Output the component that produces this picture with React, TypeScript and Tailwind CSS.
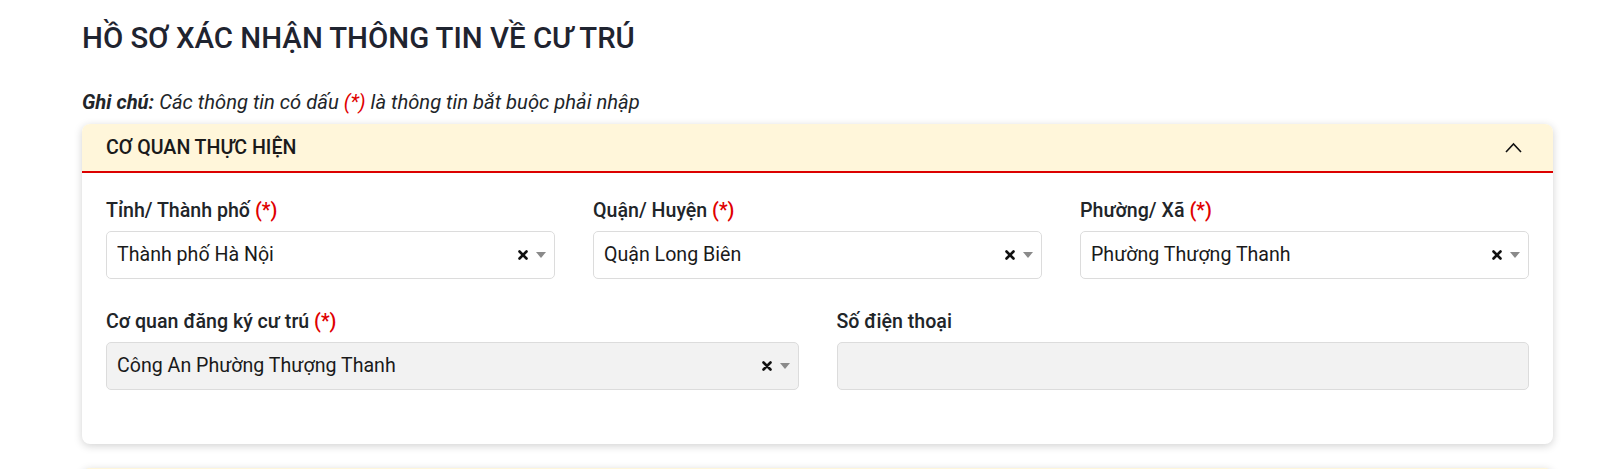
import React from "react";

const Req = () => <span className="text-[#e00000]">(*)</span>;

const ClearIcon = () => (
    <svg width="10" height="10" viewBox="0 0 10 10" className="shrink-0">
        <path d="M1.5 1.5 L8.5 8.5 M8.5 1.5 L1.5 8.5" stroke="#111" strokeWidth="2.6" strokeLinecap="round" />
    </svg>
);

const ArrowIcon = () => (
    <svg width="10" height="6" viewBox="0 0 10 6" className="shrink-0">
        <path d="M0 0 L10 0 L5 6 Z" fill="#8a8a8a" />
    </svg>
);

const medium = "font-['Roboto_Medium','Roboto',sans-serif] font-normal";

type SelectProps = { label: string; value: string; required?: boolean; disabled?: boolean };

const SelectField = ({ label, value, required, disabled }: SelectProps) => (
    <div className="flex flex-col">
        <label className={`text-[19.6px] leading-[30px] text-[#212529] mb-[5px] ${medium}`}>
            {label} {required && <Req />}
        </label>
        <div
            className={`flex items-center h-[48px] border border-[#dcdcdc] rounded-[5px] pl-[10px] pr-[8px] ${
                disabled ? "bg-[#f2f2f2]" : "bg-white"
            }`}
        >
            <span className="flex-1 text-[19.6px] text-[#1a1a1a] truncate">{value}</span>
            <ClearIcon />
            <span className="w-[8px]" />
            <ArrowIcon />
        </div>
    </div>
);

const InputField = ({ label }: { label: string }) => (
    <div className="flex flex-col">
        <label className={`text-[19.6px] leading-[30px] text-[#212529] mb-[5px] ${medium}`}>{label}</label>
        <div className="h-[48px] border border-[#dcdcdc] rounded-[5px] bg-[#f2f2f2]" />
    </div>
);

export default function App() {
    return (
        <div className="w-full h-[469px] overflow-hidden bg-white pl-[82px] font-['Roboto',sans-serif]">
            {/* Title */}
            <h1 className={`mt-[20px] text-[29.4px] leading-[36px] text-[#1f2430] ${medium}`}>
                HỒ SƠ XÁC NHẬN THÔNG TIN VỀ CƯ TRÚ
            </h1>
            {/* Note */}
            <p className="mt-[31px] text-[20.2px] leading-[30px] italic text-[#212529]">
                <span className="font-bold">Ghi chú:</span> Các thông tin có dấu <Req /> là thông tin bắt buộc phải nhập
            </p>
            {/* Card */}
            <div className="mt-[7px] w-[1471px] bg-white rounded-lg shadow-[0_2px_8px_rgba(0,0,0,0.18)] overflow-hidden">
                <div className="h-[49px] bg-[#fff6da] border-b-2 border-[#dc0000] flex items-center justify-between pl-6 pr-[31px]">
                    <span className={`text-[19.6px] leading-[30px] text-[#1a1a1a] ${medium}`}>CƠ QUAN THỰC HIỆN</span>
                    <svg width="17" height="11" viewBox="0 0 17 11">
                        <polyline points="1,10 8.5,2 16,10" fill="none" stroke="#111" strokeWidth="1.6" />
                    </svg>
                </div>
                <div className="px-6 pt-[23px] pb-[54px] flex flex-col gap-y-[28px]">
                    <div className="grid grid-cols-3 gap-x-[38px]">
                        <SelectField label="Tỉnh/ Thành phố" value="Thành phố Hà Nội" required />
                        <SelectField label="Quận/ Huyện" value="Quận Long Biên" required />
                        <SelectField label="Phường/ Xã" value="Phường Thượng Thanh" required />
                    </div>
                    <div className="grid grid-cols-2 gap-x-[38px]">
                        <SelectField label="Cơ quan đăng ký cư trú" value="Công An Phường Thượng Thanh" required disabled />
                        <InputField label="Số điện thoại" />
                    </div>
                </div>
            </div>
            {/* Next card (cut off) */}
            <div className="mt-[24px] w-[1471px] h-[48px] bg-[#fff6da] rounded-lg shadow-[0_2px_8px_rgba(0,0,0,0.18)]" />
        </div>
    );
}
